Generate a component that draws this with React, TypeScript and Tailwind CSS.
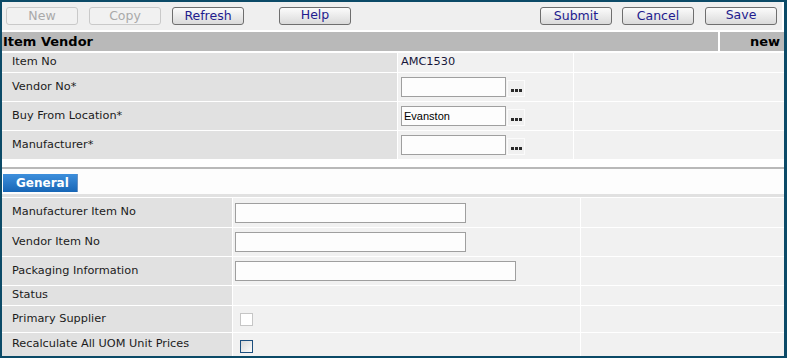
import React from 'react';

const verdana = "font-['DejaVu_Sans',Verdana,sans-serif]";

function ToolButton({ label, disabled }: { label: string; disabled?: boolean }) {
  return (
    <button
      disabled={disabled}
      className={`w-[72px] h-[18px] rounded-[3px] border text-[12.5px] leading-none ${verdana} ${
        disabled
          ? 'border-[#c9c9c9] bg-[#f1f1f1] text-[#a9a9a9]'
          : 'border-[#6e6e6e] bg-gradient-to-b from-[#fbfbfb] to-[#dadada] text-[#221b8e]'
      }`}
    >
      {label}
    </button>
  );
}

function LookupInput({ value }: { value?: string }) {
  return (
    <div className="flex items-end gap-[1px]">
      <input
        defaultValue={value}
        className="w-[105px] h-[20px] border border-[#9f9f9f] bg-[#fdfdfd] px-[2px] text-[11px] text-black outline-none font-['Liberation_Sans',Arial,sans-serif]"
      />
      <button className="w-[18px] h-[17px] border border-[#fbfbfb] bg-[#f0f0f0] flex items-center justify-center gap-[1px] pt-[3px]">
        <span className="w-[3px] h-[3px] bg-[#2a2a2a]" />
        <span className="w-[3px] h-[3px] bg-[#2a2a2a]" />
        <span className="w-[3px] h-[3px] bg-[#2a2a2a]" />
      </button>
    </div>
  );
}

function HeadRow({ label, h, children }: { label: string; h: string; children?: React.ReactNode }) {
  return (
    <div className={`grid grid-cols-[395px_175px_1fr] gap-x-px ${h}`}>
      <div className="bg-[#e1e1e1] pl-[10px] flex items-center text-[#1b1b1b]">{label}</div>
      <div className="bg-[#f1f1f1] pl-[3px] flex items-center">{children}</div>
      <div className="bg-[#f1f1f1]" />
    </div>
  );
}

function TabRow({ label, h, children }: { label: string; h: string; children?: React.ReactNode }) {
  return (
    <div className={`grid grid-cols-[230px_347px_1fr] gap-x-px ${h}`}>
      <div className="bg-[#e1e1e1] pl-[10px] flex items-center text-[#1b1b1b]">{label}</div>
      <div className="bg-[#f1f1f1] pl-[2px] flex items-center">{children}</div>
      <div className="bg-[#f1f1f1]" />
    </div>
  );
}

export default function App() {
  return (
    <div
      className={`w-[787px] h-[358px] bg-white border-2 border-r-[3px] border-[#0b4a67] flex flex-col overflow-hidden text-[11.3px] ${verdana}`}
    >
      {/* Toolbar */}
      <div className="h-[28px] shrink-0 bg-[#efefef] flex items-center pl-[4px] pr-[5px] border-r-2 border-white">
        <div className="flex items-center gap-[11px]">
          <ToolButton label="New" disabled />
          <ToolButton label="Copy" disabled />
          <ToolButton label="Refresh" />
        </div>
        <div className="ml-[35px]">
          <ToolButton label="Help" />
        </div>
        <div className="ml-auto flex items-center gap-[10px]">
          <ToolButton label="Submit" />
          <ToolButton label="Cancel" />
          <div className="ml-[1px]">
            <ToolButton label="Save" />
          </div>
        </div>
      </div>
      <div className="h-[2px] shrink-0" />

      {/* Title bar */}
      <div className="h-[19px] shrink-0 flex bg-[#b9b9b9] text-[13px] font-bold text-black">
        <div className="flex-1 pl-[1px] flex items-center">Item Vendor</div>
        <div className="w-[2px] bg-white" />
        <div className="w-[64px] flex items-center justify-end pr-[4px]">new</div>
      </div>
      <div className="h-[2px] shrink-0" />

      {/* Key fields */}
      <div className="flex flex-col gap-px shrink-0">
        <HeadRow label="Item No" h="h-[19px]">
          <span className="text-[#16163a]">AMC1530</span>
        </HeadRow>
        <HeadRow label="Vendor No*" h="h-[28px]">
          <LookupInput />
        </HeadRow>
        <HeadRow label="Buy From Location*" h="h-[28px]">
          <LookupInput value="Evanston" />
        </HeadRow>
        <HeadRow label="Manufacturer*" h="h-[28px]">
          <LookupInput />
        </HeadRow>
      </div>

      <div className="h-[8px] shrink-0" />
      <div className="h-[2px] shrink-0 bg-[#b9b9b9]" />

      {/* Tabs */}
      <div className="h-[25px] shrink-0 pt-[5px] pl-[1px] bg-[#fdfdfd]">
        <div className="w-[75px] h-[18px] bg-gradient-to-b from-[#3d8fdc] to-[#1766b6] border-r border-[#6b93c2] text-white text-[12px] font-bold flex items-center pl-[13px]">
          General
        </div>
      </div>
      <div className="h-[3px] shrink-0 bg-[#e1e1e1]" />
      <div className="h-[1px] shrink-0" />

      {/* General tab fields */}
      <div className="flex flex-col gap-px">
        <TabRow label="Manufacturer Item No" h="h-[29px]">
          <input className="w-[231px] h-[20px] border border-[#9f9f9f] bg-[#fdfdfd] outline-none" />
        </TabRow>
        <TabRow label="Vendor Item No" h="h-[28px]">
          <input className="w-[231px] h-[20px] border border-[#9f9f9f] bg-[#fdfdfd] outline-none" />
        </TabRow>
        <TabRow label="Packaging Information" h="h-[28px]">
          <input className="w-[281px] h-[20px] border border-[#9f9f9f] bg-[#fdfdfd] outline-none" />
        </TabRow>
        <TabRow label="Status" h="h-[19px]" />
        <TabRow label="Primary Supplier" h="h-[26px]">
          <input
            type="checkbox"
            disabled
            className="ml-[5px] mt-[1px] appearance-none w-[13px] h-[13px] border border-[#c6c6c6] bg-white"
          />
        </TabRow>
        <TabRow label="Recalculate All UOM Unit Prices" h="h-[23px]">
          <input
            type="checkbox"
            className="ml-[5px] mt-[4px] appearance-none w-[13px] h-[13px] border border-[#1d4f7e] bg-gradient-to-br from-[#d9d9d9] to-[#fcfcfc]"
          />
        </TabRow>
      </div>
    </div>
  );
}
